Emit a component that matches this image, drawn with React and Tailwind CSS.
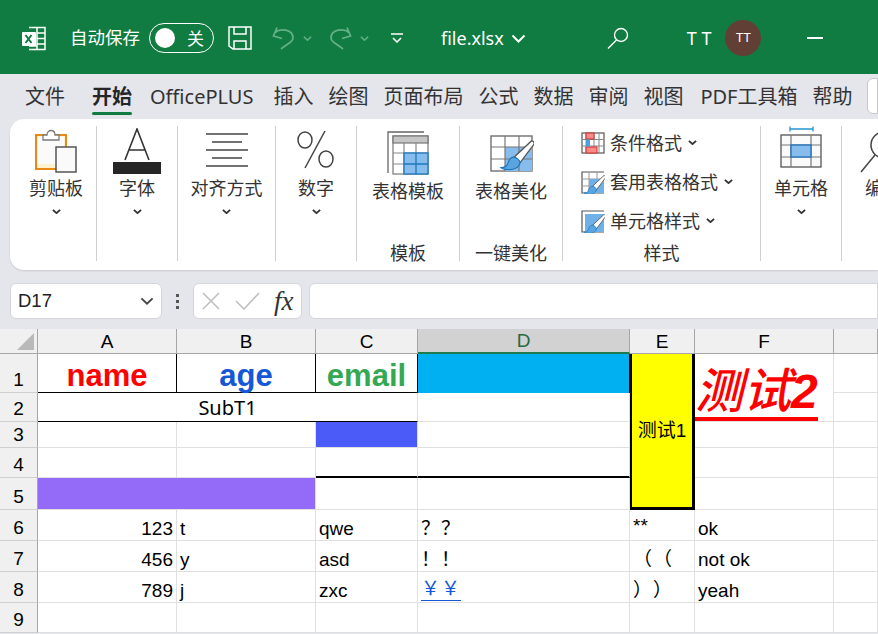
import React from 'react';

const cjk = "font-['Noto_Sans','Noto_Sans_CJK_SC',sans-serif]";
const cellFont = "font-['Liberation_Sans','Noto_Sans_CJK_SC',sans-serif]";

const Chev = ({ w = 10, h = 6, stroke = '#333', sw = 1.6, className = '' }) => (
  <svg width={w} height={h} viewBox="0 0 10 6" className={className} fill="none" preserveAspectRatio="none">
    <path d="M1 1l4 4 4-4" stroke={stroke} strokeWidth={sw} />
  </svg>
);

const ExcelLogo = () => (
  <svg width="24" height="25" viewBox="0 0 24 25" fill="none" className="shrink-0">
    <path d="M7 1.500h16v22H7" stroke="#fff" strokeWidth="1.500" />
    <path d="M15 1.500v22M15 7h8M15 12.500h8M15 18h8M7 20h8" stroke="#fff" strokeWidth="1.500" />
    <rect x="0" y="6" width="14" height="14" rx="1" fill="#fff" />
    <path d="M3.500 9l6 8M9.500 9l-6 8" stroke="#107c41" strokeWidth="2" />
  </svg>
);

const SaveIcon = () => (
  <svg width="24" height="24" viewBox="0 0 24 24" fill="none" className="ml-[14px] shrink-0">
    <path d="M1 1h22v22H5l-4-3z" stroke="#fff" strokeWidth="1.500" />
    <path d="M6 1v7h12V1M6 23v-8h12v8" stroke="#fff" strokeWidth="1.500" />
  </svg>
);

const Undo = ({ flip }) => (
  <svg width="23" height="24" viewBox="0 0 23 24" fill="none" className={flip ? 'shrink-0 -scale-x-100' : 'shrink-0'}>
    <path d="M5 1.500L1.500 10l8.500 2.500M3 6.500C8 2 21 3 21 12c0 4-6 6-12 11" stroke="#66b088" strokeWidth="1.700" />
  </svg>
);

const Search = ({ size = 22 }) => (
  <svg width={size} height={size} viewBox="0 0 22 22" fill="none" className="shrink-0">
    <circle cx="14" cy="8" r="6.500" stroke="#fff" strokeWidth="1.400" />
    <path d="M9.500 13L1 21.500" stroke="#fff" strokeWidth="1.400" />
  </svg>
);

const TitleBar = () => (
  <div className={`flex h-[74px] items-center bg-[#107c41] pl-[22px] pt-[2px] text-white ${cjk}`}>
    <ExcelLogo />
    <span className="ml-[24px] text-[17.500px] leading-none">自动保存</span>
    <div className="ml-[9px] flex h-[30px] w-[65px] items-center rounded-full border border-white pl-[5px]">
      <span className="h-[20px] w-[20px] rounded-full bg-white" />
      <span className="ml-[12px] text-[17px] leading-none">关</span>
    </div>
    <SaveIcon />
    <div className="ml-[20px] flex items-center">
      <Undo />
      <Chev w={9} h={5} stroke="#66b088" sw={1.800} className="ml-[8px]" />
    </div>
    <div className="ml-[17px] flex items-center">
      <Undo flip />
      <Chev w={9} h={5} stroke="#66b088" sw={1.800} className="ml-[8px]" />
    </div>
    <svg width="12" height="10" viewBox="0 0 12 10" fill="none" className="ml-[22px] shrink-0">
      <path d="M0 1h12M2 5l4 4 4-4" stroke="#fff" strokeWidth="1.600" />
    </svg>
    <span className="ml-[38px] text-[18px] leading-none">file.xlsx</span>
    <Chev w={15} h={9} stroke="#fff" sw={1.300} className="ml-[7px]" />
    <div className="ml-[81px]"><Search /></div>
    <span className="ml-[58px] text-[18px] leading-none">T T</span>
    <div className="ml-[14px] flex h-[36px] w-[36px] items-center justify-center rounded-full bg-[#623f35] text-[13px]">TT</div>
    <span className="ml-[46px] h-[2px] w-[16px] bg-white" />
  </div>
);

const tabs = [
  ['文件', 25],
  ['开始', 27, true],
  ['OfficePLUS', 18],
  ['插入', 20],
  ['绘图', 15],
  ['页面布局', 15],
  ['公式', 15],
  ['数据', 15],
  ['审阅', 15],
  ['视图', 15],
  ['PDF工具箱', 17],
  ['帮助', 15],
];

const MenuBar = () => (
  <div className={`flex h-[45px] items-start pt-[4px] text-[20px] text-[#333] ${cjk}`}>
    {tabs.map(([label, gap, active]) => (
      <div key={label} style={{ marginLeft: gap }} className="relative flex h-[36px] items-center whitespace-nowrap pt-[2px]">
        <span className={active ? 'font-bold text-[#262626]' : ''}>{label}</span>
        {active && <span className="absolute bottom-[-1px] left-0 h-[3px] w-full rounded-full bg-[#107c41]" />}
      </div>
    ))}
    <div className="ml-[14px] h-[36px] w-[40px] rounded-l-[6px] border border-[#c8c8cc] bg-white" />
  </div>
);

const ClipboardIcon = () => (
  <svg width="42" height="46" viewBox="0 0 42 46" fill="none">
    <rect x="1" y="7" width="30" height="34" fill="#fdf3d0" stroke="#e67e00" strokeWidth="1.800" />
    <rect x="3" y="9" width="26" height="27" fill="#fafafa" />
    <path d="M8 12V7h4c0-6 8-6 8 0h4v5z" fill="#fff" stroke="#7a7a7a" strokeWidth="1.300" />
    <rect x="21" y="19" width="20" height="25" fill="#fafafa" stroke="#555" strokeWidth="1.500" />
  </svg>
);

const FontIcon = () => (
  <svg width="48" height="46" viewBox="0 0 48 46" fill="none">
    <path d="M12 32L24 1l12 31M16 22h16" stroke="#333" strokeWidth="1.600" />
    <rect x="0" y="34" width="48" height="12" fill="#262626" />
  </svg>
);

const AlignIcon = () => (
  <svg width="42" height="34" viewBox="0 0 42 34" fill="none" stroke="#444" strokeWidth="1.500">
    <path d="M0 1h42M6 9h30M0 17h42M6 25h30M0 33h42" />
  </svg>
);

const PercentIcon = () => (
  <svg width="38" height="38" viewBox="0 0 38 38" fill="none" stroke="#444" strokeWidth="1.500">
    <ellipse cx="8" cy="9" rx="7" ry="8" />
    <ellipse cx="29" cy="28" rx="7" ry="8" />
    <path d="M28 0L8 37" />
  </svg>
);

const TableTplIcon = () => (
  <svg width="42" height="44" viewBox="0 0 42 44" fill="none">
    <path d="M1 42V1h36" stroke="#666" strokeWidth="1.300" />
    <rect x="6" y="5" width="35" height="38" fill="#fff" stroke="#777" strokeWidth="1.200" />
    <rect x="6" y="5" width="35" height="7" fill="#c6c6c6" stroke="#777" strokeWidth="1.200" />
    <path d="M17 12v31M29 12v31M6 22h35M6 33h35" stroke="#888" strokeWidth="1.200" />
    <rect x="17" y="22" width="24" height="21" fill="#86bdec" stroke="#1e77bd" strokeWidth="1.300" />
    <path d="M29 22v21M17 33h24" stroke="#1e77bd" strokeWidth="1.300" />
  </svg>
);

const Brush = ({ x = 0, y = 0, s = 1 }) => (
  <g transform={`translate(${x} ${y}) scale(${s})`}>
    <path d="M14 18L32 1c2 0 3 1 3 3L20 24z" fill="#fff" stroke="#555" strokeWidth="1.400" />
    <path d="M13 18c3 0 7 3 7 6-1 5-7 8-13 7-4 0-6-1-7-2 4 0 6-1 7-4s3-7 6-7z" fill="#5aa5e0" stroke="#1e77bd" strokeWidth="1.200" />
  </g>
);

const BeautifyIcon = () => (
  <svg width="46" height="38" viewBox="-2 0 46 38" fill="none">
    <rect x="1" y="1" width="41" height="35" fill="#fff" stroke="#666" strokeWidth="1.300" />
    <rect x="15" y="12" width="27" height="24" fill="#86bdec" />
    <path d="M15 1v35M29 1v35M1 12h41M1 24h41" stroke="#777" strokeWidth="1.200" />
    <Brush x={11} y={5} s={0.95} />
  </svg>
);

const CondIcon = () => (
  <svg width="24" height="22" viewBox="0 0 24 22" fill="none">
    <rect x="1" y="1" width="22" height="20" fill="#fff" stroke="#555" strokeWidth="1.200" />
    <path d="M5 1v20M13 1v20M18 1v20M1 7.500h22M1 14h22" stroke="#888" />
    <rect x="5" y="1" width="8" height="6" fill="#f98b8b" stroke="#d42a2a" />
    <rect x="5" y="15" width="11" height="6" fill="#f98b8b" stroke="#d42a2a" />
    <rect x="5" y="7.500" width="4" height="7" fill="#4f9fdc" />
  </svg>
);

const SmallTableIcon = ({ full }) => (
  <svg width="24" height="24" viewBox="0 0 24 24" fill="none">
    <path d="M23 2H1v21h22" fill="#fff" stroke="#555" strokeWidth="1.200" />
    {!full && <path d="M8 2v21M16 2v21M1 9h22M1 16h22" stroke="#999" />}
    <rect x={full ? 4 : 8} y={full ? 5 : 9} width={full ? 19 : 15} height={full ? 18 : 14} fill="#6fb0e6" />
    <Brush x={3} y={5} s={0.62} />
  </svg>
);

const CellIcon = () => (
  <svg width="42" height="42" viewBox="0 0 42 42" fill="none">
    <path d="M1 3h23M1 0.500v5M24 0.500v5" transform="translate(9 0)" stroke="#2a93d5" strokeWidth="1.300" />
    <rect x="1" y="9" width="40" height="32" fill="#fafafa" stroke="#555" strokeWidth="1.300" />
    <path d="M11 9v32M31 9v32M1 19h40M1 31h40" stroke="#777" strokeWidth="1.200" />
    <rect x="11" y="19" width="20" height="12" fill="#86bdec" stroke="#1e6fb8" strokeWidth="1.300" />
  </svg>
);

const EditIcon = () => (
  <svg width="38" height="44" viewBox="0 0 38 44" fill="none">
    <circle cx="24" cy="13" r="13" stroke="#444" strokeWidth="1.500" />
    <path d="M15 23L1 40" stroke="#444" strokeWidth="1.500" />
  </svg>
);

const BigBtn = ({ icon, label, iconH = 46, topPad, chev, labelMt = 0 }) => (
  <div className="flex flex-col items-center">
    <div style={{ height: iconH, marginTop: topPad }} className="flex items-start justify-center">{icon}</div>
    <span style={{ marginTop: labelMt }} className="whitespace-nowrap text-[18px] leading-[24px]">{label}</span>
    {chev && <Chev w={9} h={5} stroke="#333" sw={2} className="mt-[9px]" />}
  </div>
);

const Group = ({ width, children, footer, border = true, className = '' }) => (
  <div
    style={{ width }}
    className={`relative flex h-[135px] shrink-0 flex-col items-center ${border ? 'border-r border-[#cfcfcf]' : ''} ${className}`}
  >
    {children}
    {footer && <span className="absolute bottom-[-4px] whitespace-nowrap text-[18px] leading-[24px]">{footer}</span>}
  </div>
);

const StyleRow = ({ icon, label }) => (
  <div className="flex h-[39px] items-center whitespace-nowrap">
    <div className="flex w-[29px] justify-start">{icon}</div>
    <span className="text-[18px] leading-none">{label}</span>
    <Chev w={9} h={5} stroke="#333" sw={2} className="ml-[6px]" />
  </div>
);

const Ribbon = () => (
  <div className={`ml-[10px] flex h-[151px] items-start overflow-hidden rounded-l-[14px] bg-white pt-[7px] text-[#333] shadow-[0_1px_2px_rgba(0,0,0,0.12)] ${cjk}`}>
    <Group width={87} className="pl-[6px]">
      <BigBtn icon={<ClipboardIcon />} label="剪贴板" topPad={2} chev labelMt={2} />
    </Group>
    <Group width={81}>
      <BigBtn icon={<FontIcon />} label="字体" topPad={2} chev labelMt={2} />
    </Group>
    <Group width={98}>
      <BigBtn icon={<AlignIcon />} label="对齐方式" topPad={7} chev labelMt={-3} />
    </Group>
    <Group width={81}>
      <BigBtn icon={<PercentIcon />} label="数字" topPad={5} chev labelMt={-1} />
    </Group>
    <Group width={103} footer="模板">
      <BigBtn icon={<TableTplIcon />} label="表格模板" topPad={5} labelMt={2} />
    </Group>
    <Group width={103} footer="一键美化">
      <BigBtn icon={<BeautifyIcon />} label="表格美化" topPad={9} labelMt={-2} />
    </Group>
    <Group width={198} footer="样式">
      <div className="-mt-[3px] flex w-full flex-col pl-[18px]">
        <StyleRow icon={<CondIcon />} label="条件格式" />
        <StyleRow icon={<SmallTableIcon />} label="套用表格格式" />
        <StyleRow icon={<SmallTableIcon full />} label="单元格样式" />
      </div>
    </Group>
    <Group width={81}>
      <BigBtn icon={<CellIcon />} label="单元格" topPad={0} chev labelMt={4} />
    </Group>
    <Group width={60} border={false} className="!items-start">
      <div className="ml-[18px] mt-[6px] flex flex-col items-start">
        <EditIcon />
        <span className="ml-[5px] whitespace-nowrap text-[18px] leading-[24px]">编</span>
      </div>
    </Group>
  </div>
);

const FormulaBar = () => (
  <div className={`flex h-[59px] items-start pl-[10px] pt-[13px] ${cellFont}`}>
    <div className="flex h-[36px] w-[152px] items-center justify-between rounded-[6px] border border-[#d6d6da] bg-white pl-[7px] pr-[7px] text-[18.500px] text-[#222]">
      <span>D17</span>
      <Chev w={14} h={8} stroke="#444" sw={1.300} />
    </div>
    <div className="ml-[14px] flex h-[36px] flex-col items-center justify-center gap-[3px]">
      <span className="h-[3px] w-[3px] bg-[#555]" />
      <span className="h-[3px] w-[3px] bg-[#555]" />
      <span className="h-[3px] w-[3px] bg-[#555]" />
    </div>
    <div className="ml-[14px] flex h-[36px] w-[109px] items-center rounded-[6px] border border-[#d6d6da] bg-white pl-[8px]">
      <svg width="18" height="18" viewBox="0 0 18 18" fill="none" stroke="#bdbdbd" strokeWidth="1.500">
        <path d="M1 1l16 16M17 1L1 17" />
      </svg>
      <svg width="25" height="18" viewBox="0 0 25 18" fill="none" stroke="#bdbdbd" strokeWidth="1.500" className="ml-[15px]">
        <path d="M1 9l8 8L24 1" />
      </svg>
      <span className="ml-[14px] font-['Liberation_Serif',serif] text-[27px] font-medium italic leading-none text-[#333]">fx</span>
    </div>
    <div className="ml-[7px] h-[36px] flex-1 rounded-l-[6px] border border-[#d6d6da] bg-white" />
  </div>
);

const colHeaders = ['A', 'B', 'C', 'D', 'E', 'F', ''];
const line = 'border-r border-b border-[#e0e0e0]';

const Cell = ({ className = '', children }) => (
  <div className={`flex min-w-0 whitespace-nowrap leading-none ${line} ${className}`}>
    {children}
  </div>
);

const RowHead = ({ n }) => (
  <div className="flex items-end justify-center border-r border-b border-r-[#a6a6a6] border-b-[#cfcfcf] bg-[#f0f0f0] pb-[1px] leading-[22px]">
    {n}
  </div>
);

const DataRow = ({ row, values }) => (
  <>
    <RowHead n={row} />
    <Cell className="items-center justify-end pr-[3px] pt-[6px]">{values[0]}</Cell>
    <Cell className="items-center pl-[3px] pt-[6px]">{values[1]}</Cell>
    <Cell className="items-center pl-[3px] pt-[6px]">{values[2]}</Cell>
    <Cell className="items-center pl-[3px] pt-[6px]">{values[3]}</Cell>
    <Cell className="items-center pl-[3px] pt-[6px]">{values[4]}</Cell>
    <Cell className="items-center pl-[3px] pt-[6px]">{values[5]}</Cell>
    <Cell />
  </>
);

const Sheet = () => (
  <div className={`grid grid-cols-[38px_139px_139px_102px_212px_65px_139px_44px] grid-rows-[25px_39px_29px_26px_30px_32px_31px_31px_31px_30px] bg-white text-[19px] text-black [text-spacing-trim:space-all] ${cellFont}`}>
    <div className="relative border-r border-b border-[#a6a6a6] bg-[#f0f0f0]">
      <span className="absolute right-[3px] bottom-[3px] h-0 w-0 border-b-[17px] border-l-[17px] border-b-[#b9b9b9] border-l-transparent" />
    </div>
    {colHeaders.map((h) => (
      <div
        key={h || 'G'}
        className={`flex items-center justify-center border-r border-b border-[#a6a6a6] leading-none ${
          h === 'D' ? 'border-b-[2px] border-b-[#1f7a4d] bg-[#d2d2d2] text-[#1f6b45]' : 'bg-[#f0f0f0]'
        }`}
      >
        {h}
      </div>
    ))}

    {/* row 1 */}
    <RowHead n={1} />
    <Cell className="items-center justify-center border-r-black border-b-black pt-[4px] text-[31px] font-bold text-[#ff0000]">name</Cell>
    <Cell className="items-center justify-center border-r-black border-b-black pt-[4px] text-[31px] font-bold text-[#1558d6]">age</Cell>
    <Cell className="items-center justify-center border-r-black border-b-black pt-[4px] text-[31px] font-bold text-[#34a853]">email</Cell>
    <Cell className="border-b-0 bg-[#00b0f0]" />
    <div className="row-span-5 -ml-[1px] flex items-center justify-center border-x-[3px] border-b-[3px] border-black bg-[#ffff00] text-[19px] leading-none whitespace-nowrap">测试1</div>
    <Cell className="row-span-2 items-end">
      <span className="inline-block border-b-[4px] border-[#ff0000] text-[48px] font-medium italic leading-[50px] text-[#ff0000]">
        测试<span className="font-bold">2</span>
      </span>
    </Cell>
    <Cell />

    {/* row 2 */}
    <RowHead n={2} />
    <Cell className="col-span-3 items-center justify-center border-b-black pt-[2px] font-['Noto_Sans',sans-serif] text-[20px]">SubT1</Cell>
    <Cell />
    <Cell />

    {/* row 3 */}
    <RowHead n={3} />
    <Cell />
    <Cell />
    <Cell className="border-0 bg-[#4b5bf7]" />
    <Cell />
    <Cell />
    <Cell />

    {/* row 4 */}
    <RowHead n={4} />
    <Cell />
    <Cell />
    <Cell className="border-b-[2px] border-b-black" />
    <Cell className="border-b-[2px] border-b-black" />
    <Cell />
    <Cell />

    {/* row 5 */}
    <RowHead n={5} />
    <Cell className="col-span-2 border-0 bg-[#946bf8]" />
    <Cell />
    <Cell />
    <Cell />
    <Cell />

    <DataRow row={6} values={['123', 't', 'qwe', <span className="tracking-[1px]">？？</span>, <span className="-mt-[6px]">**</span>, 'ok']} />
    <DataRow row={7} values={['456', 'y', 'asd', <span className="tracking-[1px]">！！</span>, <span className="tracking-[1px]">（（</span>, 'not ok']} />
    <DataRow row={8} values={['789', 'j', 'zxc', <span className="border-b border-[#1558d6] pb-[2px] tracking-[1px] text-[#1558d6]">￥￥</span>, <span className="tracking-[1px]">））</span>, 'yeah']} />
    <DataRow row={9} values={['', '', '', '', '', '']} />
  </div>
);

export default function App() {
  return (
    <div className="h-[634px] w-[878px] overflow-hidden bg-[#e4e6ec]">
      <TitleBar />
      <MenuBar />
      <Ribbon />
      <FormulaBar />
      <Sheet />
    </div>
  );
}
